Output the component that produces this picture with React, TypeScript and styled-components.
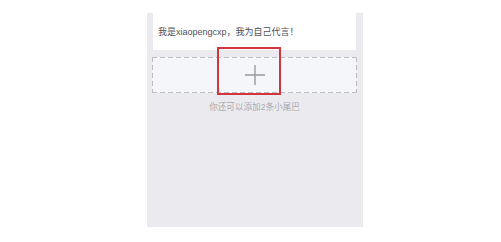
import React from "react";
import styled, { createGlobalStyle } from "styled-components";

const GlobalStyle = createGlobalStyle`
  html, body {
    margin: 0;
    padding: 0;
    background: #ffffff;
    font-family: "Liberation Sans", "Noto Sans CJK SC", sans-serif;
  }
`;

const Page = styled.div`
  width: 501px;
  height: 242px;
  padding-top: 13px;
  box-sizing: border-box;
`;

const Phone = styled.div`
  margin-left: 147px;
  width: 216px;
  height: 214px;
  background: #ebebef;
  display: flex;
  flex-direction: column;
  padding: 0 7px 0 6px;
  box-sizing: border-box;
`;

const Card = styled.div`
  height: 36px;
  background: #ffffff;
  display: flex;
  align-items: center;
  padding: 0 5px 1px;
  font-size: 9px;
  color: #505055;
`;

const dash = "#bdbdc2";

const AddBox = styled.div`
  position: relative;
  margin: 7px -1px 0 -1px;
  height: 36px;
  background-color: #f5f6f9;
  background-image:
    repeating-linear-gradient(90deg, ${dash} 0 5px, transparent 5px 8px),
    repeating-linear-gradient(90deg, ${dash} 0 5px, transparent 5px 8px),
    repeating-linear-gradient(180deg, ${dash} 0 5px, transparent 5px 8px),
    repeating-linear-gradient(180deg, ${dash} 0 5px, transparent 5px 8px);
  background-size: 100% 1px, 100% 1px, 1px 100%, 1px 100%;
  background-position: 0 0, 0 100%, 0 0, 100% 0;
  background-repeat: no-repeat;
  display: flex;
  align-items: center;
  justify-content: center;
`;

const Highlight = styled.div`
  position: absolute;
  left: 65px;
  top: -10px;
  width: 64px;
  height: 48px;
  border: 2px solid #d2353b;
  box-sizing: border-box;
`;

const Hint = styled.div`
  margin-top: 7px;
  text-align: center;
  font-size: 8.6px;
  color: #aaaab0;
`;

const PlusIcon = () => (
  <svg width="22" height="22" viewBox="0 0 22 22">
    <path d="M11 1 V21 M1 11 H21" stroke="#9a9a9e" strokeWidth="1.4" fill="none" />
  </svg>
);

export default function App() {
  return (
    <>
      <GlobalStyle />
      <Page>
        <Phone>
          <Card>我是xiaopengcxp，我为自己代言！</Card>
          <AddBox>
            <PlusIcon />
            <Highlight />
          </AddBox>
          <Hint>你还可以添加2条小尾巴</Hint>
        </Phone>
      </Page>
    </>
  );
}
